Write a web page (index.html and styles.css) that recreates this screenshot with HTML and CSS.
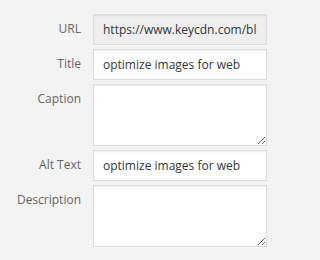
FILE: index.html
```html
<!DOCTYPE html>
<html>
<head>
<meta charset="utf-8">
<link rel="stylesheet" href="styles.css">
</head>
<body>
<div class="form">
  <label class="lbl" for="url">URL</label>
  <input class="field readonly" id="url" type="text" readonly value="https://www.keycdn.com/blog/optimize-images-for-web">
  <label class="lbl" for="title">Title</label>
  <input class="field" id="title" type="text" value="optimize images for web">
  <label class="lbl" for="caption">Caption</label>
  <textarea class="field area" id="caption"></textarea>
  <label class="lbl" for="alt">Alt Text</label>
  <input class="field" id="alt" type="text" value="optimize images for web">
  <label class="lbl" for="desc">Description</label>
  <textarea class="field area" id="desc"></textarea>
</div>
</body>
</html>
```
FILE: styles.css
```css
html, body {
  margin: 0;
  padding: 0;
  background: #f3f3f3;
}
body {
  font-family: "Open Sans", "Liberation Sans", sans-serif;
}
.form {
  display: grid;
  grid-template-columns: 81px 174px;
  column-gap: 12px;
  row-gap: 4px;
  padding-top: 14px;
  align-items: start;
}
.lbl {
  text-align: right;
  font-size: 12px;
  line-height: 17px;
  color: #666;
  padding-top: 6px;
}
.field {
  box-sizing: border-box;
  width: 174px;
  height: 31px;
  margin: 0;
  border: 1px solid #ddd;
  background: #fff;
  box-shadow: inset 0 1px 2px rgba(0, 0, 0, 0.07);
  font-family: "Open Sans", "Liberation Sans", sans-serif;
  font-size: 12px;
  color: #32373c;
  padding: 3px 9px;
  outline: none;
  border-radius: 0;
}
.readonly {
  background: #eee;
}
.area {
  height: 62px;
  resize: vertical;
  display: block;
}
```
